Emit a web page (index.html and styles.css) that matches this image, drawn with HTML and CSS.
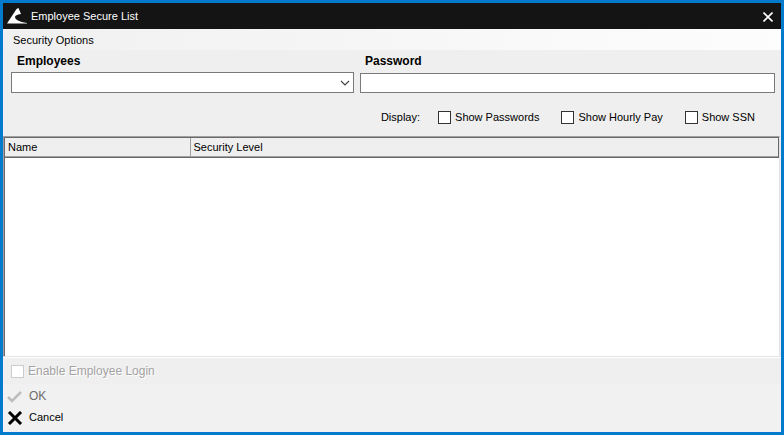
FILE: index.html
```html
<!DOCTYPE html>
<html lang="en">
<head>
    <meta charset="utf-8">
    <title>Employee Secure List</title>
    <link rel="stylesheet" href="styles.css">
</head>
<body>
    <div class="window">
        <header class="titlebar">
            <svg class="logo" width="20" height="16" viewBox="0 0 20 16">
                <path d="M9.5 1 L11.5 0 L14 6 C10 6.5 8 7.5 8 9 C8 11.5 12 14 20 15 L20 15.5 L0 15.5 Z" fill="#fff"/>
            </svg>
            <h1>Employee Secure List</h1>
            <button class="close" type="button" aria-label="Close">
                <svg width="10" height="10" viewBox="0 0 10 10">
                    <path d="M0.5 0.5 L9.5 9.5 M9.5 0.5 L0.5 9.5" stroke="#fff" stroke-width="1.6"/>
                </svg>
            </button>
        </header>

        <nav class="menu">
            <button type="button">Security Options</button>
        </nav>

        <form class="fields">
            <div class="field employees">
                <label for="employee">Employees</label>
                <div class="combo">
                    <select id="employee">
                        <option></option>
                    </select>
                    <svg class="arrow" width="10" height="6" viewBox="0 0 10 6">
                        <path d="M1 1 L5 5 L9 1" fill="none" stroke="#444" stroke-width="1.2"/>
                    </svg>
                </div>
            </div>
            <div class="field password">
                <label for="password">Password</label>
                <input type="text" id="password">
            </div>
        </form>

        <div class="display">
            <span class="caption">Display:</span>
            <label class="check"><input type="checkbox">Show Passwords</label>
            <label class="check"><input type="checkbox">Show Hourly Pay</label>
            <label class="check"><input type="checkbox">Show SSN</label>
        </div>

        <div class="list">
            <table>
                <thead>
                    <tr>
                        <th class="name">Name</th>
                        <th>Security Level</th>
                    </tr>
                </thead>
                <tbody></tbody>
            </table>
        </div>

        <div class="login">
            <label class="check"><input type="checkbox" disabled>Enable Employee Login</label>
        </div>

        <footer class="actions">
            <button class="ok" type="button" disabled>
                <svg width="16" height="14" viewBox="0 0 16 14">
                    <path d="M1 7 L5 11 L14 2" fill="none" stroke="#bdbdbd" stroke-width="2.5"/>
                </svg>
                OK
            </button>
            <button type="button">
                <svg width="16" height="14" viewBox="0 0 16 14">
                    <path d="M2 1 L14 13 M14 1 L2 13" fill="none" stroke="#000" stroke-width="3"/>
                </svg>
                Cancel
            </button>
        </footer>
    </div>
</body>
</html>
```
FILE: styles.css
```css
* {
    box-sizing: border-box;
}

body {
    margin: 0;
    font-family: "Liberation Sans", Arial, sans-serif;
    font-size: 11px;
    line-height: 15px;
    color: #000;
}

button {
    border: none;
    background: none;
    padding: 0;
    font: inherit;
    color: inherit;
}

svg {
    display: block;
}

.window {
    display: flex;
    flex-direction: column;
    min-height: 100vh;
    border: 3px solid #007acc;
    background: #efefef;
}

.titlebar {
    display: flex;
    align-items: center;
    gap: 4px;
    height: 26px;
    padding: 0 8px 0 4px;
    background: #141414;
    color: #fff;
}

.titlebar h1 {
    flex: 1;
    margin: 0;
    font-size: 11px;
    font-weight: normal;
}

.close {
    padding-top: 2px;
}

.menu {
    display: flex;
    height: 21px;
    padding: 1px 10px 0;
    background: linear-gradient(to right, #f0f0f0, #fdfdfd);
}

.fields {
    display: grid;
    grid-template-columns: 343fr 415fr;
    gap: 6px;
    padding: 4px 6px 0 8px;
}

.field {
    display: flex;
    flex-direction: column;
}

.field label {
    height: 18px;
    padding-left: 6px;
    font-size: 12px;
    font-weight: bold;
}

.password label {
    height: 19px;
    padding-left: 5px;
}

.combo {
    position: relative;
}

.combo select,
.field input {
    display: block;
    width: 100%;
    height: 21px;
    border: 1px solid #7a7a7a;
    border-radius: 0;
    background: #fff;
    appearance: none;
    font: inherit;
}

.field input {
    height: 20px;
}

.arrow {
    position: absolute;
    right: 4px;
    top: 8px;
    pointer-events: none;
}

.display {
    display: flex;
    justify-content: flex-end;
    gap: 22px;
    padding: 17px 26px 11px 0;
}

.caption {
    margin-right: -4px;
}

.check {
    display: flex;
    align-items: center;
    gap: 4px;
}

.check input {
    width: 13px;
    height: 13px;
    margin: 0;
    border: 1px solid #333;
    background: #fff;
    appearance: none;
}

.check input:checked {
    background: #333;
}

.list {
    flex: 1;
    margin-right: 1px;
    border: 1px solid #a0a0a0;
    border-right-color: #e3e3e3;
    border-bottom-color: #e3e3e3;
    background: #fff;
    box-shadow: inset 1px 0 #696969;
}

.list table {
    width: 100%;
    border-collapse: separate;
    border-spacing: 0;
    border: 1px solid #696969;
}

.list th {
    height: 19px;
    padding: 0 3px;
    border-bottom: 1px solid #a0a0a0;
    background: #efefef;
    font-weight: normal;
    text-align: left;
}

.list .name {
    width: 24%;
    border-right: 1px solid #a0a0a0;
}

.login {
    padding: 6px 8px 5px;
    border-top: 1px solid #fff;
    font-size: 12px;
    color: #a3a3a3;
    text-shadow: 1px 1px #fff;
}

.login input {
    border-color: #ccc;
}

.actions {
    display: flex;
    flex-direction: column;
    gap: 6px;
    padding: 5px 4px 7px;
    background: #f1f1f1;
}

.actions button {
    display: flex;
    align-items: center;
    gap: 6px;
}

.actions .ok {
    font-size: 12px;
    color: #6d6d6d;
}
```
